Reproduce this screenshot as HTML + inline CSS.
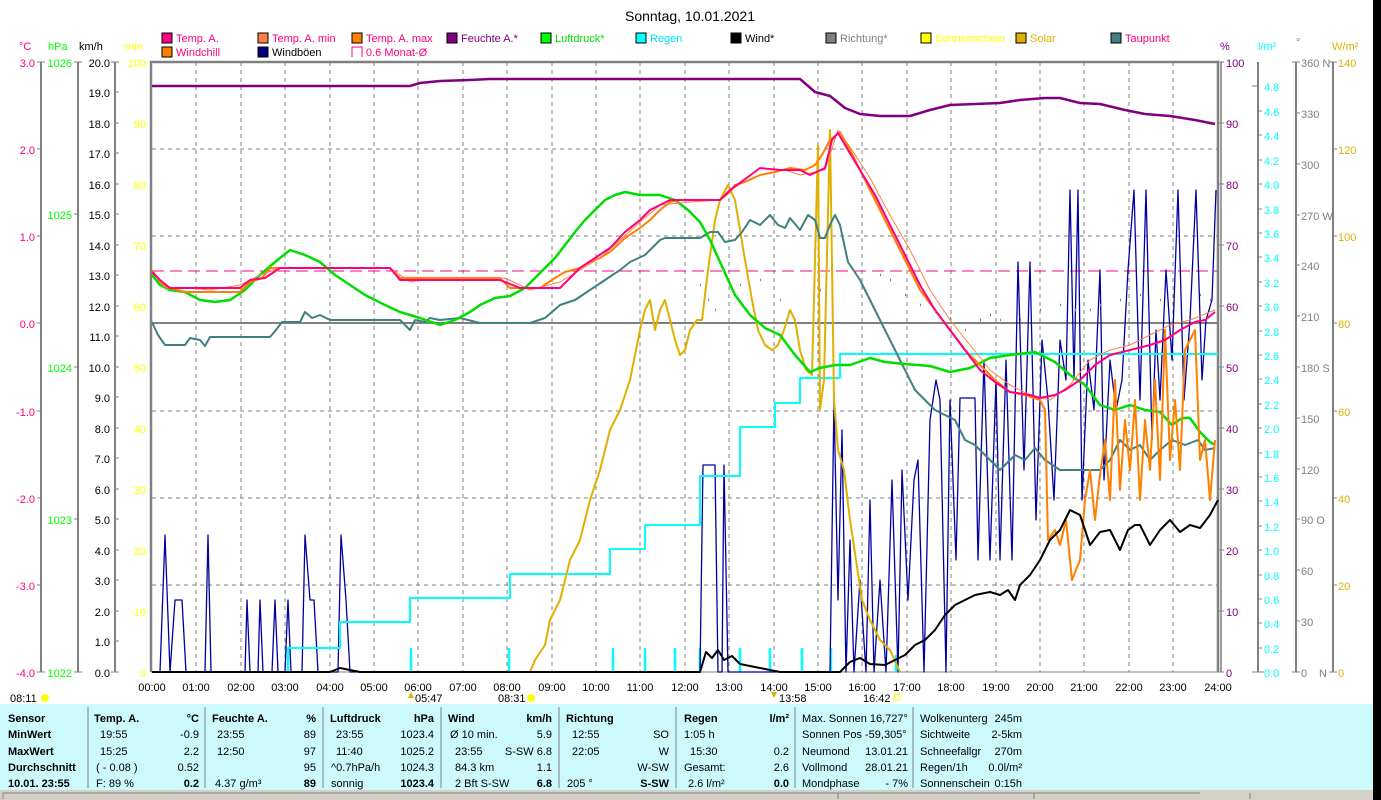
<!DOCTYPE html>
<html><head><meta charset="utf-8"><style>
html,body{margin:0;padding:0;background:#fff;width:1381px;height:800px;overflow:hidden;font-family:"Liberation Sans",sans-serif}
svg{position:absolute;left:0;top:0}
text{font-family:"Liberation Sans",sans-serif;font-size:11px}
.tb text{font-size:11px}
.b{font-weight:bold}
</style></head><body>
<svg width="1381" height="800" viewBox="0 0 1381 800">
<rect x="1373" y="0" width="8" height="800" fill="#000"/>
<text x="690" y="21" text-anchor="middle" style="font-size:14px">Sonntag, 10.01.2021</text>
<g>
<rect x="162" y="33" width="10" height="10" fill="#ff0080" stroke="#000"/><text x="176" y="42" fill="#ff0080">Temp. A.</text>
<rect x="258" y="33" width="10" height="10" fill="#ff8040" stroke="#000"/><text x="272" y="42" fill="#ff0080">Temp. A. min</text>
<rect x="352" y="33" width="10" height="10" fill="#ff8000" stroke="#000"/><text x="366" y="42" fill="#ff0080">Temp. A. max</text>
<rect x="447" y="33" width="10" height="10" fill="#800080" stroke="#000"/><text x="461" y="42" fill="#800080">Feuchte A.*</text>
<rect x="541" y="33" width="10" height="10" fill="#00ff00" stroke="#000"/><text x="555" y="42" fill="#00dd00">Luftdruck*</text>
<rect x="636" y="33" width="10" height="10" fill="#00ffff" stroke="#000"/><text x="650" y="42" fill="#00e0ff">Regen</text>
<rect x="731" y="33" width="10" height="10" fill="#000" stroke="#000"/><text x="745" y="42" fill="#000">Wind*</text>
<rect x="826" y="33" width="10" height="10" fill="#808080" stroke="#000"/><text x="840" y="42" fill="#808080">Richtung*</text>
<rect x="921" y="33" width="10" height="10" fill="#ffff00" stroke="#000"/><text x="935" y="42" fill="#ffff00">Sonnenschein</text>
<rect x="1016" y="33" width="10" height="10" fill="#e0b000" stroke="#000"/><text x="1030" y="42" fill="#e0b000">Solar</text>
<rect x="1111" y="33" width="10" height="10" fill="#408080" stroke="#000"/><text x="1125" y="42" fill="#ff0080">Taupunkt</text>
<rect x="162" y="47" width="10" height="10" fill="#ff8000" stroke="#000"/><text x="176" y="56" fill="#ff0080">Windchill</text>
<rect x="258" y="47" width="10" height="10" fill="#000080" stroke="#000"/><text x="272" y="56" fill="#000">Windböen</text>
<path d="M352 57V47h10v10" fill="none" stroke="#ff0080"/><text x="366" y="56" fill="#ff0080">0.6 Monat-Ø</text>
</g>
<text x="19" y="50" fill="#ff0080">°C</text>
<text x="48" y="50" fill="#00ff00">hPa</text>
<text x="79" y="50" fill="#000">km/h</text>
<text x="125" y="50" fill="#ffff00">min</text>
<text x="1220" y="50" fill="#800080">%</text>
<text x="1258" y="50" fill="#00ffff">l/m²</text>
<text x="1296" y="46" fill="#808080">°</text>
<text x="1332" y="50" fill="#e0b000">W/m²</text>
<g stroke="#808080" stroke-width="2"><line x1="41" y1="62" x2="41" y2="672"/><line x1="78" y1="62" x2="78" y2="672"/><line x1="115" y1="62" x2="115" y2="672"/>
<line x1="1258" y1="62" x2="1258" y2="672"/><line x1="1296" y1="62" x2="1296" y2="672"/><line x1="1333" y1="62" x2="1333" y2="672"/></g>
<g stroke="#808080" stroke-width="1">
<path d="M37 62h8M37 149h4M37 236h4M37 323h4M37 411h4M37 498h4M37 585h4M37 672h8
M74 62h8M74 214h4M74 367h4M74 519h4M74 672h8
M111 62h8M115 92h4M115 123h4M115 153h4M115 184h4M115 214h4M115 245h4M115 275h4M115 306h4M115 336h4M115 367h4M115 397h4M115 428h4M115 458h4M115 489h4M115 519h4M115 550h4M115 580h4M115 611h4M115 641h4M111 672h8
M1218 62h6M1218 123h6M1218 184h6M1218 245h6M1218 306h6M1218 367h6M1218 428h6M1218 489h6M1218 550h6M1218 611h6M1218 672h6
M1252 86h6M1252 672h12M1258 111h4M1258 135h4M1258 160h4M1258 184h4M1258 209h4M1258 233h4M1258 257h4M1258 282h4M1258 306h4M1258 331h4M1258 355h4M1258 379h4M1258 404h4M1258 428h4M1258 453h4M1258 477h4M1258 501h4M1258 526h4M1258 550h4M1258 575h4M1258 599h4M1258 623h4M1258 648h4
M1292 62h8M1296 113h4M1296 164h4M1296 215h4M1296 265h4M1296 316h4M1296 367h4M1296 418h4M1296 469h4M1296 519h4M1296 570h4M1296 621h4M1292 672h8
M1329 62h8M1333 149h4M1333 236h4M1333 323h4M1333 411h4M1333 498h4M1333 585h4M1329 672h8"/>
</g>
<g fill="#ff0080" text-anchor="end"><text x="35" y="67">3.0</text><text x="35" y="154">2.0</text><text x="35" y="241">1.0</text><text x="35" y="328">0.0</text><text x="35" y="416">-1.0</text><text x="35" y="503">-2.0</text><text x="35" y="590">-3.0</text><text x="35" y="677">-4.0</text></g>
<g fill="#00ff00" text-anchor="end"><text x="72" y="67">1026</text><text x="72" y="219">1025</text><text x="72" y="372">1024</text><text x="72" y="524">1023</text><text x="72" y="677">1022</text></g>
<g fill="#000" text-anchor="end"><text x="110" y="67">20.0</text><text x="110" y="97">19.0</text><text x="110" y="128">18.0</text><text x="110" y="158">17.0</text><text x="110" y="189">16.0</text><text x="110" y="219">15.0</text><text x="110" y="250">14.0</text><text x="110" y="280">13.0</text><text x="110" y="311">12.0</text><text x="110" y="341">11.0</text><text x="110" y="372">10.0</text><text x="110" y="402">9.0</text><text x="110" y="433">8.0</text><text x="110" y="463">7.0</text><text x="110" y="494">6.0</text><text x="110" y="524">5.0</text><text x="110" y="555">4.0</text><text x="110" y="585">3.0</text><text x="110" y="616">2.0</text><text x="110" y="646">1.0</text><text x="110" y="677">0.0</text></g>
<g fill="#ffff00" text-anchor="end"><text x="146" y="67">100</text><text x="146" y="128">90</text><text x="146" y="189">80</text><text x="146" y="250">70</text><text x="146" y="311">60</text><text x="146" y="372">50</text><text x="146" y="433">40</text><text x="146" y="494">30</text><text x="146" y="555">20</text><text x="146" y="616">10</text><text x="146" y="677">0</text></g>
<g fill="#800080"><text x="1226" y="67">100</text><text x="1226" y="128">90</text><text x="1226" y="189">80</text><text x="1226" y="250">70</text><text x="1226" y="311">60</text><text x="1226" y="372">50</text><text x="1226" y="433">40</text><text x="1226" y="494">30</text><text x="1226" y="555">20</text><text x="1226" y="616">10</text><text x="1226" y="677">0</text></g>
<g fill="#00ffff"><text x="1264" y="91">4.8</text><text x="1264" y="116">4.6</text><text x="1264" y="140">4.4</text><text x="1264" y="165">4.2</text><text x="1264" y="189">4.0</text><text x="1264" y="214">3.8</text><text x="1264" y="238">3.6</text><text x="1264" y="262">3.4</text><text x="1264" y="287">3.2</text><text x="1264" y="311">3.0</text><text x="1264" y="336">2.8</text><text x="1264" y="360">2.6</text><text x="1264" y="384">2.4</text><text x="1264" y="409">2.2</text><text x="1264" y="433">2.0</text><text x="1264" y="458">1.8</text><text x="1264" y="482">1.6</text><text x="1264" y="506">1.4</text><text x="1264" y="531">1.2</text><text x="1264" y="555">1.0</text><text x="1264" y="580">0.8</text><text x="1264" y="604">0.6</text><text x="1264" y="628">0.4</text><text x="1264" y="653">0.2</text><text x="1264" y="677">0.0</text></g>
<g fill="#808080"><text x="1301" y="67">360 N</text><text x="1301" y="118">330</text><text x="1301" y="169">300</text><text x="1301" y="220">270 W</text><text x="1301" y="270">240</text><text x="1301" y="321">210</text><text x="1301" y="372">180 S</text><text x="1301" y="423">150</text><text x="1301" y="474">120</text><text x="1301" y="524">90 O</text><text x="1301" y="575">60</text><text x="1301" y="626">30</text><text x="1301" y="677">0</text><text x="1319" y="677">N</text></g>
<g fill="#e0b000"><text x="1338" y="67">140</text><text x="1338" y="154">120</text><text x="1338" y="241">100</text><text x="1338" y="328">80</text><text x="1338" y="416">60</text><text x="1338" y="503">40</text><text x="1338" y="590">20</text><text x="1338" y="677">0</text></g>
<g stroke="#808080" stroke-dasharray="4,4" stroke-width="1">
<path d="M196 62V672M241 62V672M285 62V672M330 62V672M374 62V672M418 62V672M463 62V672M507 62V672M552 62V672M596 62V672M640 62V672M685 62V672M729 62V672M774 62V672M818 62V672M862 62V672M907 62V672M951 62V672M996 62V672M1040 62V672M1084 62V672M1129 62V672M1173 62V672"/>
<path d="M152 149H1218M152 236H1218M152 411H1218M152 498H1218M152 585H1218"/>
</g>
<line x1="152" y1="323" x2="1218" y2="323" stroke="#808080" stroke-width="2"/>
<line x1="152" y1="271" x2="1218" y2="271" stroke="#ff0080" stroke-dasharray="12,6"/>
<path d="M151 672V62H1218V672" fill="none" stroke="#808080" stroke-width="2.5"/>
<line x1="1221" y1="62" x2="1221" y2="672" stroke="#808080" stroke-width="1.5"/>
<line x1="151" y1="672" x2="1221" y2="672" stroke="#808080" stroke-width="1"/>
<g fill="#000" text-anchor="middle"><text x="152" y="691">00:00</text><text x="196" y="691">01:00</text><text x="241" y="691">02:00</text><text x="285" y="691">03:00</text><text x="330" y="691">04:00</text><text x="374" y="691">05:00</text><text x="418" y="691">06:00</text><text x="463" y="691">07:00</text><text x="507" y="691">08:00</text><text x="552" y="691">09:00</text><text x="596" y="691">10:00</text><text x="640" y="691">11:00</text><text x="685" y="691">12:00</text><text x="729" y="691">13:00</text><text x="774" y="691">14:00</text><text x="818" y="691">15:00</text><text x="862" y="691">16:00</text><text x="907" y="691">17:00</text><text x="951" y="691">18:00</text><text x="996" y="691">19:00</text><text x="1040" y="691">20:00</text><text x="1084" y="691">21:00</text><text x="1129" y="691">22:00</text><text x="1173" y="691">23:00</text><text x="1218" y="691">24:00</text></g>
<text x="10" y="702">08:11</text><circle cx="45" cy="698" r="4" fill="#ffff00"/>
<text x="415" y="702">05:47</text><path d="M411 692l-3 6h6z" fill="#e0b000"/>
<text x="498" y="702">08:31</text><circle cx="531" cy="698" r="4" fill="#ffff00"/>
<text x="779" y="702">13:58</text><path d="M771 692h6l-3 6z" fill="#e0b000"/>
<text x="863" y="702">16:42</text><rect x="894" y="694" width="6" height="6" fill="none" stroke="#ffff00"/>
<g fill="none" stroke-linejoin="round">
<path d="M288 648v24M411 648v24M509 648v24M613 648v24M645 648v24M675 648v24M700 648v24M740 648v24M770 648v24M802 648v24M831 648v24M896 655v17" stroke="#00ffff" stroke-width="2.5"/>
<path d="M152 672H160L165 535L170 672L175 600H182L186 672H205L208 535L211 672H245L247 600L250 672H258L260 600L263 672H272L275 600L278 672H285L288 600L291 672H302L305 535L310 600L314 600L318 672H338L341 535L346 600L350 672H700L703 465H715L718 672H722L724 465L728 672H830L834 400L838 600L842 430L846 672L850 540L854 672L860 580L866 672L870 500L874 672L880 580L886 672L892 480L898 672L902 470L908 600L914 480L918 460L924 672L930 420L936 380L940 400L946 672L950 400L956 560L960 398H975L978 560L984 360L990 560L996 380L1000 560L1006 360L1012 560L1018 262L1024 470L1030 262L1036 520L1042 340L1048 400L1054 500L1060 340L1066 380L1070 190L1074 380L1078 190L1082 500L1088 360L1094 410L1100 270L1104 480L1110 360L1116 410L1122 380L1128 270L1134 190L1140 400L1146 190L1152 440L1156 330L1160 400L1166 270L1172 360L1178 190L1184 400L1190 320L1196 190L1202 380L1206 320L1212 300L1216 190" stroke="#0000a0" stroke-width="1.3"/>
<path d="M152 672H288V648H340V622H410V598H510V574H610V549H645V525H700V476H740V427H775V403H800V378H840V354H1218" stroke="#00ffff" stroke-width="2"/>
<path d="M152 86H410L420 83L440 81L470 80L490 79H800L815 92L830 96L845 108L860 114L880 116H910L930 110L950 105L975 104L1000 103L1020 100L1045 98L1060 98L1080 103L1100 104L1125 110L1145 114L1170 116L1195 120L1215 124" stroke="#800080" stroke-width="2.5"/>
<path d="M530 672L535 660L545 645L550 620L560 600L570 560L580 540L590 500L600 470L610 430L620 410L630 380L640 330L645 310L650 300L655 330L660 310L665 300L670 320L675 340L680 355L685 350L690 330L697 320L702 320L708 270L715 220L720 200L728 185L735 200L740 230L745 260L752 300L758 330L765 345L772 350L778 345L784 330L790 310L795 320L800 350L806 370L812 375L818 145L820 410L824 380L830 130L834 400L838 450L844 470L850 520L856 560L862 600L870 620L880 640L890 650L900 672" stroke="#e0b000" stroke-width="2"/>
<path d="M152 322L158 335L165 345H185L190 338L200 340L205 346L210 337H270L276 330L282 322H300L305 312L312 318L320 315L330 320H400L410 330L415 320L425 322L430 318L440 320L460 318L480 323H530L545 318L560 305L575 300L590 290L605 280L620 270L630 262L645 255L660 240L665 238H700L710 232L718 232L725 242L735 240L742 232L750 220L760 225L770 215L778 225L785 228L790 218L800 230L808 215L815 220L820 238L825 238L830 225L835 215L840 225L848 262L860 280L875 310L890 340L905 370L915 390L925 400L935 410L945 415L955 420L965 440L975 445L985 455L1000 470L1015 455L1025 460L1035 448L1045 460L1060 470H1100L1110 460L1120 440L1130 450L1140 445L1150 460L1160 450L1172 440L1185 445L1198 440L1205 450L1215 448" stroke="#408080" stroke-width="2"/>
<path d="M152 275L160 285L170 290L185 292L200 300L215 302L230 300L245 290L260 275L275 262L290 250L305 255L320 262L335 275L350 285L365 295L385 305L400 312L420 318L440 325L455 320L470 312L480 305L495 298L510 296L525 288L535 278L545 268L555 258L565 245L575 232L585 220L595 210L605 200L615 195L625 192L640 195L660 195L675 200L688 210L700 222L710 240L720 262L735 295L750 315L765 328L780 335L795 355L810 372L820 368L835 365L850 365L870 358L885 362L905 364L930 366L950 372L970 368L990 358L1010 355L1035 352L1055 362L1070 375L1085 385L1100 405L1115 410L1130 405L1145 410L1160 412L1172 425L1182 418L1190 418L1200 432L1210 442L1215 445" stroke="#00dd00" stroke-width="2.5"/>
<path d="M152 270L160 282L170 288L185 292H240L250 282L262 278L270 268L280 268H390L400 278L410 278L420 278H500L510 288H540L555 278L565 272L580 268L590 262L600 258L610 252L625 238L640 228L650 220L660 210L670 202L680 200H720L730 192L735 185L745 182L760 175L775 172L790 168L805 170L815 165L822 155L830 140L840 132L850 150L860 170L870 190L880 210L890 230L905 260L920 290L935 310L950 330L965 350L980 365L995 380L1010 392L1025 395L1040 400L1045 410L1048 540L1055 530L1060 545L1066 520L1072 580L1080 560L1085 500L1090 470L1095 520L1100 475L1105 440L1110 500L1115 380L1120 490L1125 420L1130 470L1135 400L1140 500L1145 420L1150 470L1155 380L1160 480L1165 330L1170 460L1175 400L1180 470L1185 350L1190 340L1195 330L1200 460L1205 440L1210 500L1215 440" stroke="#ff8000" stroke-width="2"/>
<path d="M152 272L165 288L190 288L210 290L240 285L260 275L280 268H390L410 282L430 278H505L530 290L560 282L580 270L600 258L620 240L640 222L660 205L690 202L720 200L740 182L760 168L785 170L800 175L825 170L838 130L852 150L870 178L890 215L910 250L930 290L950 320L970 345L990 370L1010 385L1030 395L1050 400L1070 385L1090 360L1110 350L1130 345L1150 335L1170 325L1190 320L1215 310" stroke="#ff8040" stroke-width="1"/>
<path d="M152 272L160 280L170 288H240L250 280L265 278L280 268H390L400 280H500L520 288H560L570 278L580 268L595 258L610 248L625 232L640 220L650 210L660 205L670 200H720L730 190L740 183L760 168L780 170H800L810 175L825 168L832 140L838 133L848 150L860 170L875 195L890 225L905 255L920 285L935 310L950 330L965 350L980 370L995 382L1010 392L1030 395L1040 398L1055 395L1065 390L1080 380L1095 365L1110 355L1130 350L1150 345L1165 340L1180 330L1195 322L1205 320L1215 312" stroke="#ff0080" stroke-width="2"/>
<path d="M700 285l1 0M708 300l1 0M715 310l1 0M740 285l1 0M760 280l1 0M780 300l1 0M820 290l1 0M860 280l1 0M880 275l1 0M890 280l1 0M905 295l1 0M920 305l1 0M935 312l1 0M950 318l1 0M965 330l1 0M980 320l1 0M990 315l1 0M1000 320l1 0M1020 320l1 0M1040 310l1 0M1060 305l1 0M1075 310l1 0M1090 310l1 0M1100 305l1 0M1120 300l1 0M1140 295l1 0M1160 300l1 0M1180 300l1 0M1200 295l1 0M1210 300l1 0" stroke="#808080" stroke-width="2.5" stroke-dasharray="1,5"/>
<path d="M152 672H330L340 668L360 672H700L706 652L712 658L718 650L724 660L732 656L740 664L760 668L780 672H840L850 662L860 658L870 664L885 665L895 660L905 655L915 645L925 640L935 630L945 615L955 605L965 600L975 595L990 592L1000 595L1008 590L1015 600L1020 585L1030 575L1040 560L1050 540L1060 530L1070 510L1080 515L1090 545L1100 532L1110 530L1120 550L1128 530L1135 525L1140 525L1150 545L1160 530L1170 520L1180 532L1190 525L1200 528L1210 515L1218 500" stroke="#000" stroke-width="2"/>
</g>
<rect x="0" y="704" width="1373" height="86" fill="#ccfafa"/>
<g stroke="#808080"><path d="M88 707V788M205 707V788M323 707V788M441 707V788M559 707V788M676 707V788M795 707V788M913 707V788"/></g>
<rect x="0" y="790" width="1373" height="10" fill="#d4d0c8"/>
<path d="M3 799V793H1200M838 793V799M1034 793V799M1250 793V799" stroke="#808080" fill="none"/>
<g class="tb" fill="#000">
<text x="8" y="722" class="b">Sensor</text><text x="8" y="738" class="b">MinWert</text><text x="8" y="755" class="b">MaxWert</text><text x="8" y="771" class="b">Durchschnitt</text><text x="8" y="787" class="b">10.01. 23:55</text>
<text x="94" y="722" class="b">Temp. A.</text><text x="199" y="722" class="b" text-anchor="end">°C</text>
<text x="100" y="738">19:55</text><text x="199" y="738" text-anchor="end">-0.9</text>
<text x="100" y="755">15:25</text><text x="199" y="755" text-anchor="end">2.2</text>
<text x="96" y="771">( - 0.08 )</text><text x="199" y="771" text-anchor="end">0.52</text>
<text x="96" y="787">F: 89 %</text><text x="199" y="787" text-anchor="end" class="b">0.2</text>
<text x="212" y="722" class="b">Feuchte A.</text><text x="316" y="722" class="b" text-anchor="end">%</text>
<text x="217" y="738">23:55</text><text x="316" y="738" text-anchor="end">89</text>
<text x="217" y="755">12:50</text><text x="316" y="755" text-anchor="end">97</text>
<text x="316" y="771" text-anchor="end">95</text>
<text x="215" y="787">4.37 g/m³</text><text x="316" y="787" text-anchor="end" class="b">89</text>
<text x="330" y="722" class="b">Luftdruck</text><text x="434" y="722" class="b" text-anchor="end">hPa</text>
<text x="336" y="738">23:55</text><text x="434" y="738" text-anchor="end">1023.4</text>
<text x="336" y="755">11:40</text><text x="434" y="755" text-anchor="end">1025.2</text>
<text x="331" y="771">^0.7hPa/h</text><text x="434" y="771" text-anchor="end">1024.3</text>
<text x="331" y="787">sonnig</text><text x="434" y="787" text-anchor="end" class="b">1023.4</text>
<text x="448" y="722" class="b">Wind</text><text x="552" y="722" class="b" text-anchor="end">km/h</text>
<text x="450" y="738">Ø 10 min.</text><text x="552" y="738" text-anchor="end">5.9</text>
<text x="455" y="755">23:55</text><text x="552" y="755" text-anchor="end">S-SW 6.8</text>
<text x="455" y="771">84.3 km</text><text x="552" y="771" text-anchor="end">1.1</text>
<text x="455" y="787">2 Bft S-SW</text><text x="552" y="787" text-anchor="end" class="b">6.8</text>
<text x="566" y="722" class="b">Richtung</text>
<text x="572" y="738">12:55</text><text x="669" y="738" text-anchor="end">SO</text>
<text x="572" y="755">22:05</text><text x="669" y="755" text-anchor="end">W</text>
<text x="669" y="771" text-anchor="end">W-SW</text>
<text x="567" y="787">205 °</text><text x="669" y="787" text-anchor="end" class="b">S-SW</text>
<text x="684" y="722" class="b">Regen</text><text x="789" y="722" class="b" text-anchor="end">l/m²</text>
<text x="684" y="738">1:05 h</text>
<text x="690" y="755">15:30</text><text x="789" y="755" text-anchor="end">0.2</text>
<text x="684" y="771">Gesamt:</text><text x="789" y="771" text-anchor="end">2.6</text>
<text x="688" y="787">2.6 l/m²</text><text x="789" y="787" text-anchor="end" class="b">0.0</text>
<text x="802" y="722">Max. Sonnen 16,727°</text>
<text x="802" y="738">Sonnen Pos  -59,305°</text>
<text x="802" y="755">Neumond</text><text x="908" y="755" text-anchor="end">13.01.21</text>
<text x="802" y="771">Vollmond</text><text x="908" y="771" text-anchor="end">28.01.21</text>
<text x="802" y="787">Mondphase</text><text x="908" y="787" text-anchor="end">- 7%</text>
<text x="920" y="722">Wolkenunterg</text><text x="1022" y="722" text-anchor="end">245m</text>
<text x="920" y="738">Sichtweite</text><text x="1022" y="738" text-anchor="end">2-5km</text>
<text x="920" y="755">Schneefallgr</text><text x="1022" y="755" text-anchor="end">270m</text>
<text x="920" y="771">Regen/1h</text><text x="1022" y="771" text-anchor="end">0.0l/m²</text>
<text x="920" y="787">Sonnenschein</text><text x="1022" y="787" text-anchor="end">0:15h</text>
</g>
</svg>
</body></html>
